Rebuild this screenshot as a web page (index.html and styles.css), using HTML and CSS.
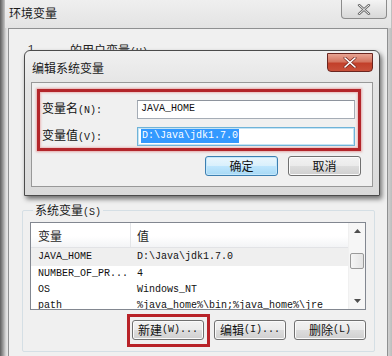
FILE: index.html
```html
<!DOCTYPE html>
<html>
<head>
<meta charset="utf-8">
<link rel="stylesheet" href="styles.css">
</head>
<body>
<div class="screen">
  <div class="win">
    <div class="win-title">
      <span class="win-title-text">环境变量</span>
      <div class="win-close">
        <svg width="14" height="11" viewBox="0 0 14 11"><path d="M2 1 L12 10 M12 1 L2 10" stroke="#6a6a6a" stroke-width="2.4" stroke-linecap="round"/><path d="M2 1 L12 10 M12 1 L2 10" stroke="#f4f4f4" stroke-width="1" stroke-linecap="round"/></svg>
      </div>
    </div>
    <div class="win-body">
      <div class="user-line"><span class="user-name">1</span><span class="user-label">的用户变量<span class="en">(U)</span></span></div>
      <div class="user-area"></div>
      <div class="group">
        <div class="group-label">系统变量<span class="en">(S)</span></div>
        <div class="listbox">
          <div class="list-main">
            <div class="list-head">
              <div class="col1 head-cell">变量</div>
              <div class="col2 head-cell">值</div>
            </div>
            <div class="list-row selected"><div class="col1">JAVA_HOME</div><div class="col2">D:\Java\jdk1.7.0</div></div>
            <div class="list-row"><div class="col1">NUMBER_OF_PR...</div><div class="col2">4</div></div>
            <div class="list-row"><div class="col1">OS</div><div class="col2">Windows_NT</div></div>
            <div class="list-row"><div class="col1">path</div><div class="col2">%java_home%\bin;%java_home%\jre</div></div>
          </div>
          <div class="scrollbar">
            <div class="sb-arrow"><svg width="7" height="4" viewBox="0 0 7 4"><path d="M0 4 L3.5 0 L7 4 Z" fill="#4d4d4d"/></svg></div>
            <div class="sb-gap"></div>
            <div class="sb-thumb"></div>
            <div class="sb-track"></div>
            <div class="sb-arrow"><svg width="7" height="4" viewBox="0 0 7 4"><path d="M0 0 L7 0 L3.5 4 Z" fill="#4d4d4d"/></svg></div>
          </div>
        </div>
        <div class="btn-row">
          <div class="btn-wrap">
            <div class="btn">新建<span class="en">(W)...</span></div>
            <div class="redbox-new"></div>
          </div>
          <div class="btn">编辑<span class="en">(I)...</span></div>
          <div class="btn">删除<span class="en">(L)</span></div>
        </div>
      </div>
    </div>
  </div>

  <div class="dialog">
    <div class="dlg-title">
      <span class="dlg-title-text">编辑系统变量</span>
      <div class="dlg-close">
        <svg width="14" height="11" viewBox="0 0 14 11"><path d="M2 1 L12 10 M12 1 L2 10" stroke="#7a2a22" stroke-width="3" stroke-linecap="round"/><path d="M2 1 L12 10 M12 1 L2 10" stroke="#ffffff" stroke-width="1.6" stroke-linecap="round"/></svg>
      </div>
    </div>
    <div class="dlg-client">
      <div class="redbox">
        <div class="field-row">
          <div class="field-label">变量名<span class="en">(N):</span></div>
          <div class="input"><span class="mono">JAVA_HOME</span></div>
        </div>
        <div class="field-row">
          <div class="field-label">变量值<span class="en">(V):</span></div>
          <div class="input focused"><span class="mono sel">D:\Java\jdk1.7.0</span></div>
        </div>
      </div>
      <div class="dlg-btns">
        <div class="btn dlg-btn default">确定</div>
        <div class="btn dlg-btn">取消</div>
      </div>
    </div>
  </div>
</div>
</body>
</html>
```

FILE: styles.css
```css
* { box-sizing: border-box; }

html, body {
  margin: 0;
  padding: 0;
}

body {
  width: 392px;
  height: 356px;
  overflow: hidden;
  font-family: "Noto Sans CJK SC", "Noto Sans", sans-serif;
  font-size: 12px;
  color: #111;
  background: #d9d9d9;
}

.en {
  font-family: "Liberation Mono", "DejaVu Sans Mono", monospace;
  font-size: 10px;
}

.mono {
  font-family: "Liberation Mono", "DejaVu Sans Mono", monospace;
  font-size: 10px;
  line-height: 14px;
}

.screen {
  position: relative;
  width: 392px;
  height: 356px;
}

/* ---------- outer window ---------- */
.win {
  width: 392px;
  height: 356px;
  display: flex;
  flex-direction: column;
  background:
    linear-gradient(90deg, #5e5e5e 0px, #9a9a9a 3px, #dcdcdc 6px, #e8e8e8 8px, #e8e8e8 384px, #d0d0d0 388px, #bdbdbd 392px);
}

.win-title {
  height: 28px;
  flex: none;
  display: flex;
  align-items: flex-start;
  justify-content: space-between;
  background: linear-gradient(180deg, #efefef 0%, #e3e3e3 100%);
  margin-left: 5px;
  margin-right: 1px;
}

.win-title-text {
  margin-top: 5px;
  margin-left: 4px;
  font-size: 12px;
  line-height: 16px;
  color: #1a1a1a;
}

.win-close {
  width: 46px;
  height: 19px;
  margin-right: 4px;
  border: 1px solid #8c8c8c;
  border-top: none;
  border-radius: 0 0 4px 4px;
  background: linear-gradient(180deg, #f4f4f4 0%, #e6e6e6 50%, #d8d8d8 100%);
  display: flex;
  align-items: center;
  justify-content: center;
}

.win-body {
  flex: 1;
  margin-left: 8px;
  margin-right: 4px;
  background: #f0f0f0;
  border: 1px solid #8f9091;
  border-bottom: none;
  padding: 0 12px 0 13px;
  display: flex;
  flex-direction: column;
}

.user-line {
  margin-top: 14px;
  height: 14px;
  line-height: 14px;
  display: flex;
  color: #222;
}

.user-name {
  font-family: "Liberation Mono", monospace;
  font-size: 10px;
  margin-left: 6px;
  width: 42px;
}

.user-area {
  height: 153px;
}

/* system group */
.group {
  border: 1px solid #d5dfe5;
  border-radius: 2px;
  padding: 0 8px 0 7px;
  height: 142px;
  display: flex;
  flex-direction: column;
}

.group-label {
  margin: -8px 0 0 3px;
  padding: 0 2px;
  background: #f0f0f0;
  align-self: flex-start;
  line-height: 14px;
  height: 14px;
  color: #1a1a1a;
}

.listbox {
  margin-top: 5px;
  height: 88px;
  flex: none;
  border: 1px solid #828790;
  background: #fff;
  display: flex;
  overflow: hidden;
}

.list-main {
  flex: 1;
  overflow: hidden;
}

.list-head {
  height: 25px;
  display: flex;
  background: linear-gradient(180deg, #ffffff 0%, #ffffff 55%, #f3f4f6 100%);
  border-bottom: 1px solid #e2e3e6;
}

.head-cell {
  line-height: 25px;
  font-size: 12px;
  color: #1e1e1e;
}

.col1 {
  width: 100px;
  flex: none;
  padding-left: 7px;
  white-space: nowrap;
}

.list-head .col1 {
  border-right: 1px solid #e3e5e8;
}

.col2 {
  flex: 1;
  padding-left: 6px;
  white-space: nowrap;
  overflow: hidden;
}

.list-row {
  height: 16px;
  display: flex;
  font-family: "Liberation Mono", "DejaVu Sans Mono", monospace;
  font-size: 10px;
  line-height: 16px;
  color: #111;
}

.list-row.selected {
  height: 18px;
  line-height: 18px;
  background: #efefef;
}

.scrollbar {
  width: 17px;
  flex: none;
  background: #f6f6f6;
  border-left: 1px solid #f0f0f0;
  display: flex;
  flex-direction: column;
}

.sb-arrow {
  height: 16px;
  display: flex;
  align-items: center;
  justify-content: center;
}

.sb-gap {
  height: 14px;
}

.sb-thumb {
  height: 16px;
  margin: 0 1px;
  border: 1px solid #9a9a9a;
  border-radius: 2px;
  background: linear-gradient(90deg, #f5f5f5 0%, #e4e4e4 100%);
}

.sb-track {
  flex: 1;
}

/* buttons */
.btn-row {
  margin-top: 10px;
  display: flex;
  justify-content: flex-end;
  gap: 8px;
  padding-right: 0;
}

.btn-wrap {
  position: relative;
  margin-right: 2px;
}

.btn {
  width: 72px;
  height: 20px;
  border: 1px solid #707070;
  border-radius: 3px;
  background: linear-gradient(180deg, #f2f2f2 0%, #ebebeb 48%, #dddddd 52%, #cfcfcf 100%);
  box-shadow: inset 0 0 0 1px #fbfbfb;
  display: flex;
  align-items: center;
  justify-content: center;
  font-size: 12px;
  color: #111;
  line-height: 16px;
}

.redbox-new {
  position: absolute;
  left: -5px;
  top: -6px;
  right: -6px;
  bottom: -7px;
  border: 3px solid #b82228;
}

/* ---------- dialog ---------- */
.dialog {
  position: absolute;
  left: 24px;
  top: 50px;
  width: 356px;
  height: 146px;
  border: 1px solid #4b4b4b;
  border-radius: 6px 6px 0 0;
  background: linear-gradient(180deg, #f0f0f0 0%, #e4e4e4 25%, #dadada 100%);
  box-shadow: 2px 3px 5px rgba(0, 0, 0, 0.55);
  display: flex;
  flex-direction: column;
}

.dlg-title {
  height: 31px;
  flex: none;
  display: flex;
  justify-content: space-between;
  align-items: flex-start;
}

.dlg-title-text {
  margin-top: 10px;
  margin-left: 7px;
  font-size: 12px;
  line-height: 14px;
  color: #1a1a1a;
}

.dlg-close {
  width: 46px;
  height: 19px;
  margin-top: 2px;
  margin-right: 6px;
  border: 1px solid #6b2620;
  border-radius: 0 0 4px 4px;
  background: linear-gradient(180deg, #e8a493 0%, #d47560 45%, #c2402a 55%, #c8503a 100%);
  display: flex;
  align-items: center;
  justify-content: center;
}

.dlg-client {
  margin: 0 6px 8px 6px;
  flex: 1;
  background: #f0f0f0;
  border: 1px solid #989898;
  padding: 6px 11px 0 5px;
  display: flex;
  flex-direction: column;
}

.redbox {
  border: 3px solid #b3262b;
  box-shadow: 0 0 2px 1px rgba(220, 120, 120, 0.6), inset 0 0 2px 1px rgba(230, 150, 150, 0.6);
  padding: 8px 3px 3px 2px;
  display: flex;
  flex-direction: column;
  gap: 9px;
}

.field-row {
  display: flex;
  align-items: center;
  justify-content: space-between;
  height: 18px;
}

.field-label {
  font-size: 12px;
  line-height: 16px;
  color: #111;
}

.input {
  width: 218px;
  height: 19px;
  border: 1px solid #a5acb5;
  border-top-color: #8e949d;
  background: #fff;
  padding: 1px 3px;
  display: flex;
  align-items: center;
}

.input.focused {
  border-color: #6fb3d8;
  box-shadow: inset 0 0 0 1px #c5e4f5;
}

.sel {
  background: #3399ff;
  color: #fff;
  padding: 0 1px;
}

.dlg-btns {
  margin-top: 5px;
  display: flex;
  justify-content: flex-end;
  gap: 10px;
}

.dlg-btn {
  width: 73px;
  height: 20px;
}

.dlg-btn.default {
  border-color: #3c7fb1;
  background: linear-gradient(180deg, #eaf6fd 0%, #d9f0fc 48%, #bee6fd 52%, #a7d9f5 100%);
  box-shadow: inset 0 0 0 1px #c4e7fb;
}
```
